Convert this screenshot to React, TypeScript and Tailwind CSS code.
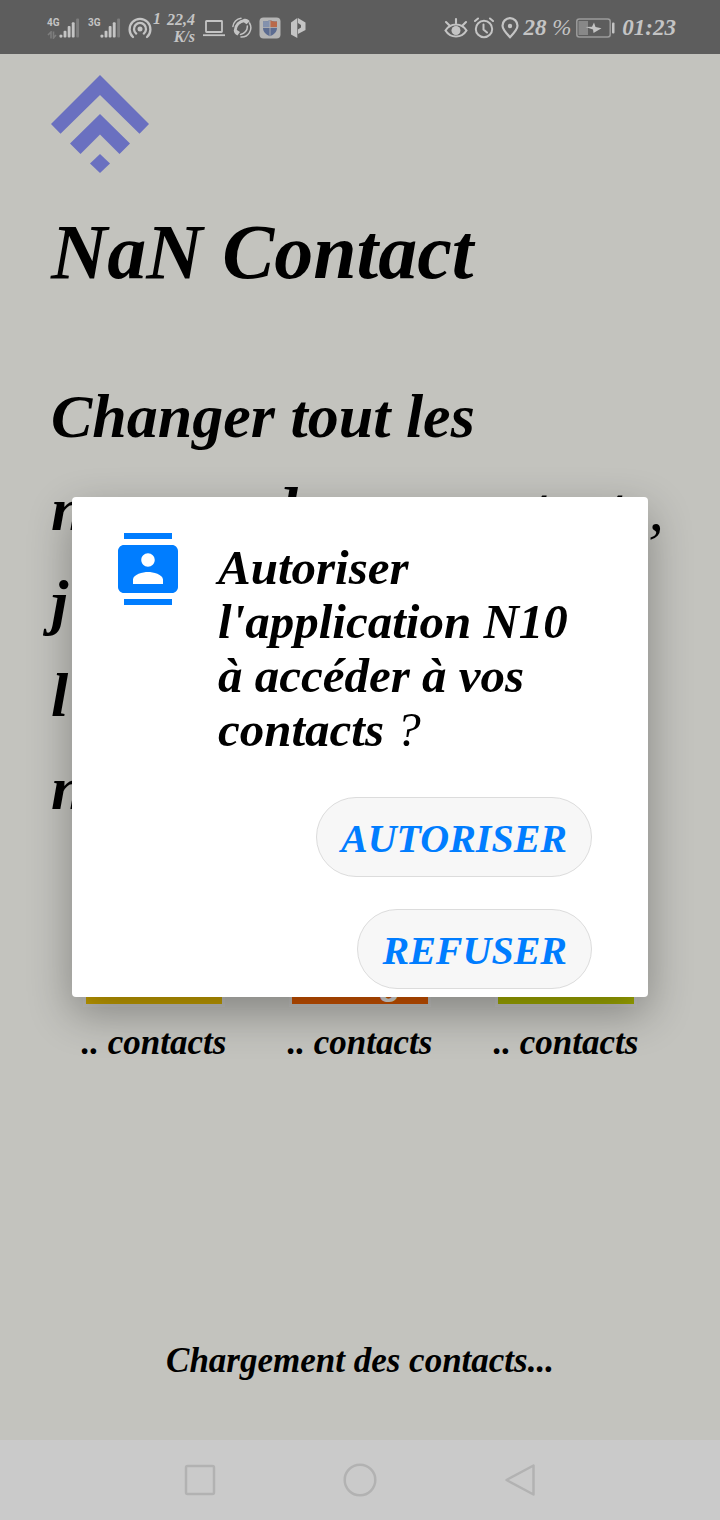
import React from "react";

function SignalBars() {
  return (
    <svg width="22" height="22" viewBox="0 0 22 22" aria-hidden="true">
      <g fill="#c4c4c4">
        <circle cx="2" cy="19.4" r="1.7" />
        <rect x="4.8" y="14" width="3" height="7" rx="1" />
        <rect x="9.1" y="9" width="3" height="12" rx="1" />
        <rect x="13.4" y="5" width="3" height="16" rx="1" />
      </g>
      <rect x="18" y="1" width="3" height="20" rx="1" fill="#7d7d7d" />
    </svg>
  );
}

function Signal({ label, arrows }: { label: string; arrows?: boolean }) {
  return (
    <div className="flex h-[22px] w-[33px] shrink-0">
      <div className="flex w-3 flex-col justify-between font-[Roboto,'Liberation_Sans',sans-serif] text-[10px] leading-[12px] font-bold not-italic">
        <span>{label}</span>
        {arrows && (
          <svg width="10" height="8" viewBox="0 0 10 8" fill="none" stroke="#7d7d7d" strokeWidth="1.6" aria-hidden="true">
            <path d="M4 7.5V1L1 4M6.5 0.5V7L9 4" />
          </svg>
        )}
      </div>
      <SignalBars />
    </div>
  );
}

function StatusBar() {
  return (
    <header className="flex h-[54px] items-center justify-between bg-[#5d5d5d] pt-px pr-11 pl-[47px] text-[#c4c4c4]">
      <div className="flex items-center">
        <Signal label="4G" arrows />
        <div className="ml-2 flex">
          <Signal label="3G" />
        </div>
        <svg className="ml-[7px]" width="24" height="22" viewBox="0 0 24 22" fill="none" stroke="currentColor" strokeWidth="2.3" strokeLinecap="round" aria-hidden="true">
          <circle cx="12" cy="12" r="2.5" fill="currentColor" stroke="none" />
          <path d="M8.2 16.6a6 6 0 1 1 7.6 0M5 20a10.4 10.4 0 1 1 14 0" />
        </svg>
        <span className="ml-px self-start text-[16px] leading-[16px]">1</span>
        <div className="ml-1 flex w-[30px] flex-col items-end text-[16px] leading-[17px]">
          <span>22,4</span>
          <span>K/s</span>
        </div>
        <svg className="ml-2" width="22" height="18" viewBox="0 0 22 18" fill="none" stroke="currentColor" strokeWidth="1.8" aria-hidden="true">
          <rect x="3" y="2" width="16" height="11" rx="0.5" />
          <path d="M0 16.2h22" />
        </svg>
        <svg className="ml-[7px]" width="20" height="21" viewBox="0 0 20 21" fill="none" stroke="currentColor" strokeWidth="1.5" strokeLinecap="round" aria-hidden="true">
          <path d="M0.9 9.5A9.2 9.2 0 0 1 9 1.2M9 20A9.3 9.3 0 0 0 17.5 6M8.5 17.5A8 8 0 0 0 15.3 9" />
          <path d="M3.2 13.500C3.200 8.500 7.500 4 12.500 3.500" strokeWidth="2.8" strokeLinecap="butt" />
          <path d="M3.800 12.200 8 15 5.500 18.500C3 17.500 1.700 15.500 1.800 13zM11.500 2c2.500-.7 5 .2 6.200 2.200L14.500 7.300 11.500 5z" fill="currentColor" stroke="none" />
        </svg>
        <svg className="ml-[7px]" width="22" height="22" viewBox="0 0 22 22" aria-hidden="true">
          <rect x="0.5" y="0.5" width="21" height="21" rx="4" fill="#b5b5b5" />
          <path d="M11 3.2c2 1 4.4 1.5 7 1.3v6.3c0 4-2.6 6.7-7 8.4-4.4-1.7-7-4.4-7-8.4V4.5c2.6.2 5-.3 7-1.3z" fill="#5c6c91" />
          <path d="M11 3.2c2 1 4.4 1.5 7 1.3v6h-7z" fill="#b9694a" />
          <path d="M4 4.5c2.6.2 5-.3 7-1.3v7.3H4z" fill="#8391ad" />
          <path d="M11 3.2v16M4 10.5h14" stroke="#b5b5b5" strokeWidth="0.8" />
        </svg>
        <svg className="ml-[9px]" width="16" height="22" viewBox="0 0 16 22" fill="currentColor" aria-hidden="true">
          <path d="M1 5.500 7.300 1v20L1 17.500z" />
          <path d="M7.900 1 15.500 5.500v7.500L7.900 17v-4.500L11 10.500V8L7.900 6z" />
        </svg>
      </div>
      <div className="flex items-center text-[24px] leading-[28px]">
        <svg width="24" height="22" viewBox="0 0 24 22" fill="none" stroke="currentColor" strokeWidth="2.1" strokeLinecap="round" aria-hidden="true">
          <path d="M1.5 13.5C4 9.5 7.5 7.5 12 7.5s8 2 10.5 6c-2.5 4-6 6-10.5 6s-8-2-10.5-6zM12 2v4M5 8 2 5M19 8l3-3" />
          <circle cx="12" cy="13.5" r="4.5" fill="currentColor" stroke="none" />
        </svg>
        <svg className="ml-[6px]" width="20" height="22" viewBox="0 0 20 22" fill="none" stroke="currentColor" strokeWidth="2" strokeLinecap="round" aria-hidden="true">
          <circle cx="10" cy="12" r="8.2" />
          <path d="M9.5 7.5v5l3.5 3M1 4l3-2.5M19 4l-3-2.5" />
        </svg>
        <svg className="ml-[7px]" width="18" height="22" viewBox="0 0 18 22" fill="none" stroke="currentColor" strokeWidth="2.2" aria-hidden="true">
          <path d="M9 20.2C4.5 15.5 1.5 12.2 1.5 8.7a7.5 7.5 0 0 1 15 0c0 3.500-3 6.800-7.500 11.500z" />
          <circle cx="9" cy="9" r="2.200" fill="currentColor" stroke="none" />
        </svg>
        <span className="ml-[4px] text-[23px] whitespace-nowrap">
          28 <span className="font-normal">%</span>
        </span>
        <svg className="ml-[5px]" width="39" height="20" viewBox="0 0 39 20" aria-hidden="true">
          <rect x="0.8" y="1" width="33.4" height="18" rx="2.5" fill="none" stroke="#9b9b9b" strokeWidth="1.5" />
          <rect x="2.500" y="3" width="9.500" height="14" fill="#888" />
          <rect x="36" y="4.500" width="2.500" height="11" rx="1" fill="#c4c4c4" />
          <path d="M9.500 9 16 8.800 18 4.500 19.500 9 25.500 10.200 17.500 15 17 11.500z" fill="#c4c4c4" />
        </svg>
        <span className="ml-[7px] text-[23px]">01:23</span>
      </div>
    </header>
  );
}

function Logo() {
  return (
    <svg width="98" height="98" viewBox="0 0 98 98" fill="#6a70c0" role="img" aria-label="NaN">
      <path d="M49 0 98 49 88.5 58.7 49 20 9.5 58.7 0 49z" />
      <path d="M49 39 79 68.5 68.5 79 49 59.5 29.5 79 19 68.5z" />
      <path d="M49 79 59 88.5 49 98 39 88.5z" />
    </svg>
  );
}

const operators = [
  { id: "yellow", name: "", colour: "bg-[#c8a200]" },
  { id: "orange", name: "orange", colour: "bg-[#cf5400]" },
  { id: "green", name: "", colour: "bg-[#a3ad00]" },
];

function PermissionDialog() {
  return (
    <div className="absolute inset-0 flex items-center justify-center px-[72px]">
      <section
        role="dialog"
        aria-labelledby="permission-title"
        className="w-full rounded bg-white pt-9 pr-14 pb-2 pl-10 shadow-[0_16px_44px_rgba(0,0,0,0.32)]"
      >
        <div className="flex items-start gap-[34px]">
          <svg className="shrink-0" width="72" height="72" viewBox="0 0 24 24" fill="#007dff" aria-hidden="true">
            <path d="M20 0H4v2h16V0zM4 24h16v-2H4v2zM20 4H4c-1.1 0-2 .9-2 2v12c0 1.1.9 2 2 2h16c1.1 0 2-.9 2-2V6c0-1.1-.9-2-2-2zm-8 2.75c1.24 0 2.25 1.01 2.25 2.25s-1.01 2.25-2.25 2.25S9.75 10.24 9.75 9 10.76 6.75 12 6.75zM17 17H7v-1.5c0-1.67 3.33-2.5 5-2.5s5 .83 5 2.5V17z" />
          </svg>
          <h2 id="permission-title" className="min-w-0 flex-1 pt-2 text-[49px] leading-[54px]">
            Autoriser l'application N10 à accéder à vos contacts <span className="font-normal">?</span>
          </h2>
        </div>
        <div className="mt-10 flex flex-col items-end gap-8 text-[40px] leading-[48px] text-[#007dff]">
          <button type="button" className="h-20 rounded-full border border-[#dcdcdc] bg-[#f7f7f7] px-6 pt-[3px]">
            AUTORISER
          </button>
          <button type="button" className="h-20 rounded-full border border-[#dcdcdc] bg-[#f7f7f7] px-6 pt-[3px]">
            REFUSER
          </button>
        </div>
      </section>
    </div>
  );
}

function NavigationBar() {
  return (
    <nav className="flex h-20 items-center justify-center gap-[124px] bg-[#cacaca]">
      <button type="button" aria-label="Applications récentes">
        <svg width="36" height="36" viewBox="0 0 36 36" fill="none" stroke="#b2b2b2" strokeWidth="2.5">
          <rect x="4" y="4" width="28" height="28" rx="1.5" />
        </svg>
      </button>
      <button type="button" aria-label="Accueil">
        <svg width="36" height="36" viewBox="0 0 36 36" fill="none" stroke="#b2b2b2" strokeWidth="2.5">
          <circle cx="18" cy="18" r="15.3" />
        </svg>
      </button>
      <button type="button" aria-label="Retour">
        <svg width="36" height="36" viewBox="0 0 36 36" fill="none" stroke="#b2b2b2" strokeWidth="2.5" strokeLinejoin="round">
          <path d="M31.500 3.500v29L4.500 18z" />
        </svg>
      </button>
    </nav>
  );
}

export default function App() {
  return (
    <div className="flex min-h-screen flex-col bg-[#c3c3be] font-['Liberation_Serif',serif] font-bold text-black italic">
      <StatusBar />
      <div className="relative flex flex-1 flex-col">
        <main className="flex flex-1 flex-col px-[51px] pt-[21px] pb-[55px]">
          <Logo />
          <h1 className="mt-8 text-[78px] leading-[94px]">NaN Contact</h1>
          <p className="mt-[71px] text-[62px] leading-[93px]">
            Changer tout les
            <br />
            numero de vos contacts<span className="font-normal">,</span>
            <br />
            j
            <br />
            l
            <br />n
          </p>
          <ul className="mt-[30px] grid grid-cols-3">
            {operators.map((operator) => (
              <li key={operator.id} className="flex flex-col items-center">
                <div
                  className={`flex h-[142px] w-[142px] items-end justify-center border-3 border-[#c6c6c4] pb-1 font-['Liberation_Sans',sans-serif] text-[36px] leading-[36px] text-[#e0e0e0] not-italic ${operator.colour}`}
                >
                  {operator.name}
                </div>
                <span className="mt-3 text-[35px] leading-[48px] whitespace-nowrap">.. contacts</span>
              </li>
            ))}
          </ul>
          <p className="mt-auto text-center text-[35px] leading-[48px]">Chargement des contacts...</p>
        </main>
        <PermissionDialog />
      </div>
      <NavigationBar />
    </div>
  );
}
